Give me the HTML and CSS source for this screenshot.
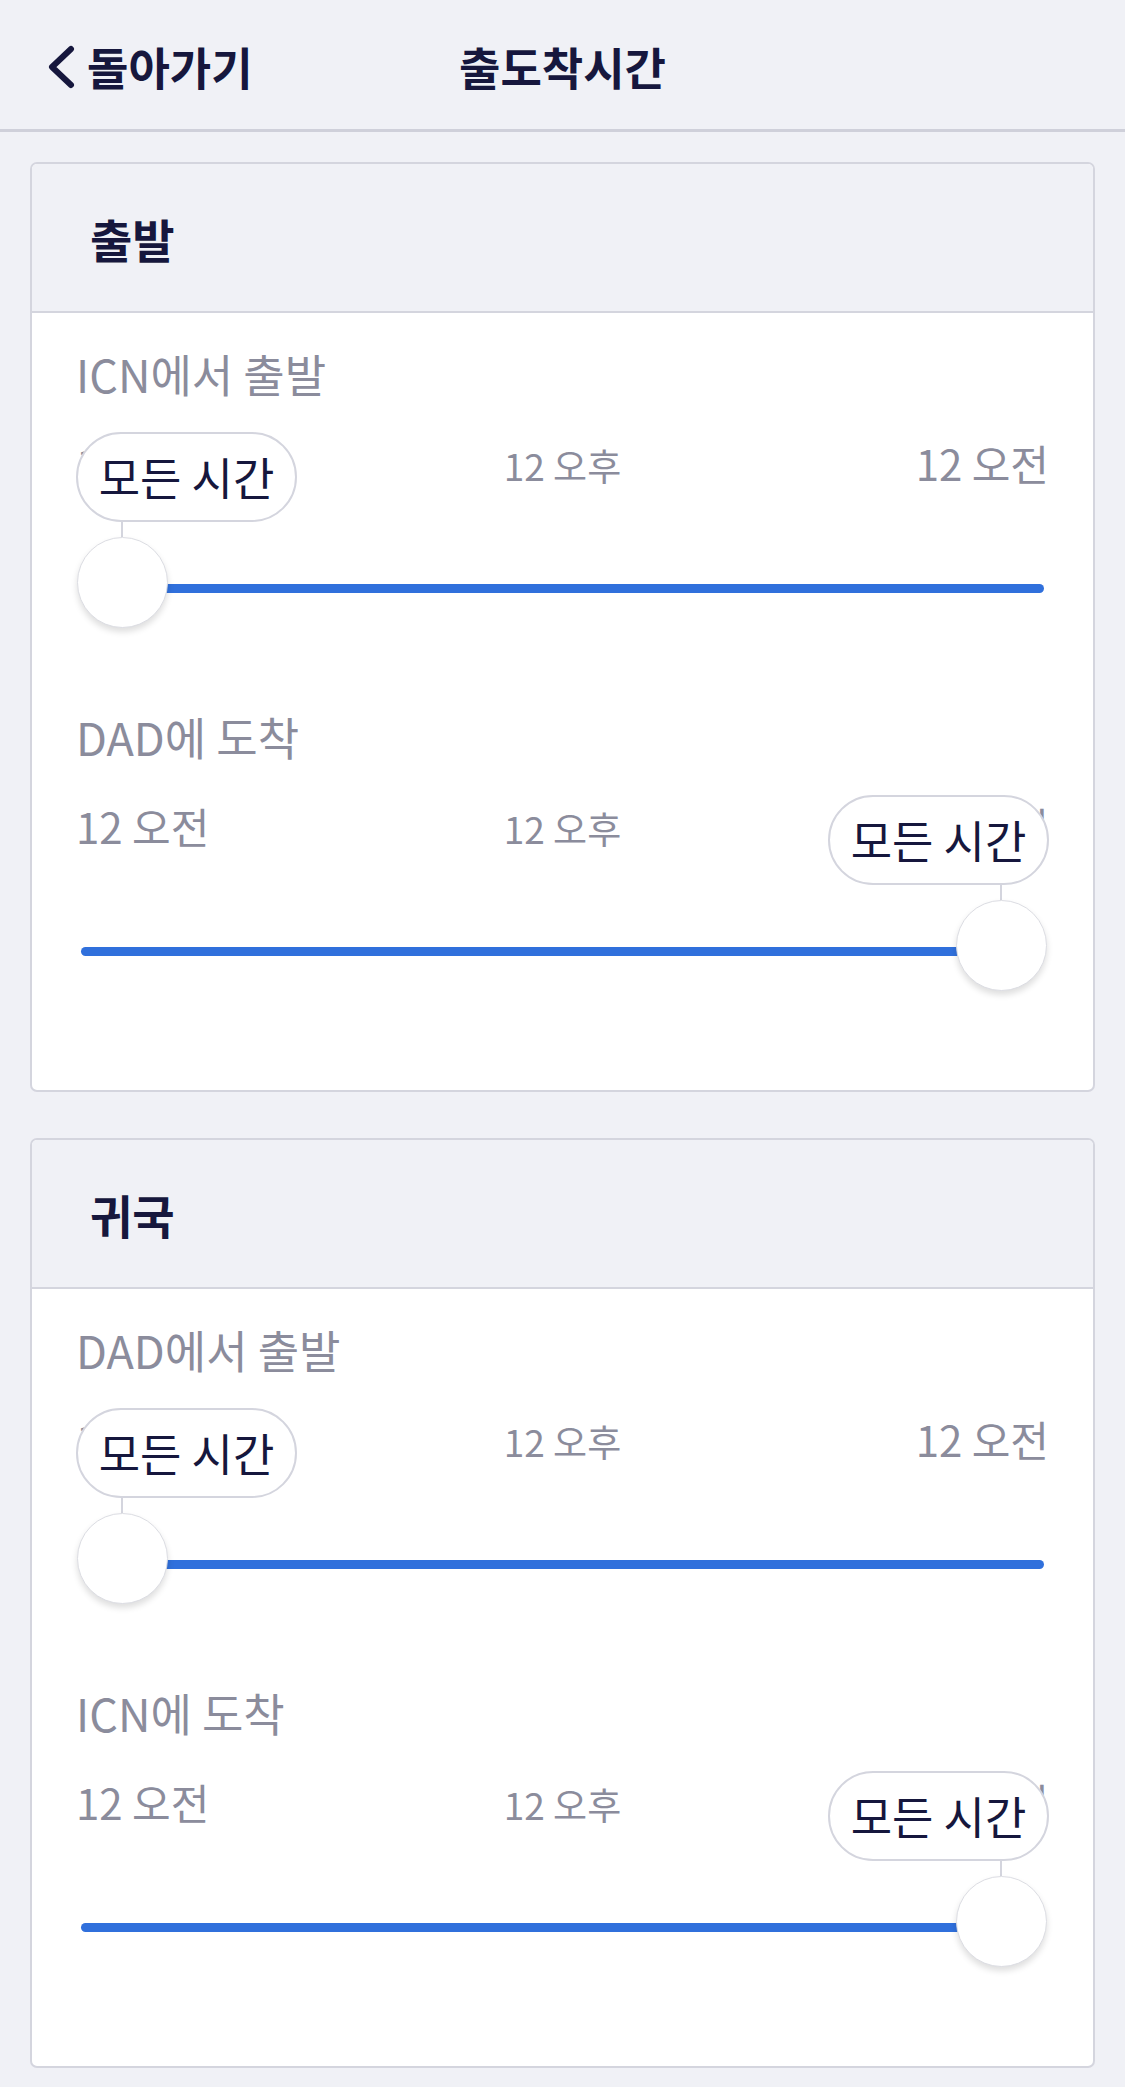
FILE: index.html
```html
<!DOCTYPE html>
<html>
<head>
  <meta name="viewport" content="width=device-width, initial-scale=1.0">
  <link rel="stylesheet" href="styles.css">
</head>
<body>
  <div class="header">
    <a class="back-button">
      <svg width="28" height="44" viewBox="0 0 28 44">
        <path d="M24 4 L5 22 L24 40" fill="none" stroke="#16173d" stroke-width="6" stroke-linecap="round" stroke-linejoin="round"/>
      </svg>
      <span>돌아가기</span>
    </a>
    <div class="title">출도착시간</div>
    <div></div>
  </div>

  <div class="content">
    <div class="card">
      <div class="card-header">출발</div>
      <div class="card-body">
        <div class="slider">
          <div class="slider-label">ICN에서 출발</div>
          <div class="range">
            <div class="ticks">
              <span class="tick">12 오전</span>
              <span class="tick mid">12 오후</span>
              <span class="tick">12 오전</span>
            </div>
            <div class="track"></div>
            <div class="bubble">모든 시간</div>
            <div class="stem"></div>
            <div class="thumb"></div>
          </div>
        </div>
        <div class="slider">
          <div class="slider-label">DAD에 도착</div>
          <div class="range end">
            <div class="ticks">
              <span class="tick">12 오전</span>
              <span class="tick mid">12 오후</span>
              <span class="tick">12 오전</span>
            </div>
            <div class="track"></div>
            <div class="bubble">모든 시간</div>
            <div class="stem"></div>
            <div class="thumb"></div>
          </div>
        </div>
      </div>
    </div>

    <div class="card">
      <div class="card-header">귀국</div>
      <div class="card-body">
        <div class="slider">
          <div class="slider-label">DAD에서 출발</div>
          <div class="range">
            <div class="ticks">
              <span class="tick">12 오전</span>
              <span class="tick mid">12 오후</span>
              <span class="tick">12 오전</span>
            </div>
            <div class="track"></div>
            <div class="bubble">모든 시간</div>
            <div class="stem"></div>
            <div class="thumb"></div>
          </div>
        </div>
        <div class="slider">
          <div class="slider-label">ICN에 도착</div>
          <div class="range end">
            <div class="ticks">
              <span class="tick">12 오전</span>
              <span class="tick mid">12 오후</span>
              <span class="tick">12 오전</span>
            </div>
            <div class="track"></div>
            <div class="bubble">모든 시간</div>
            <div class="stem"></div>
            <div class="thumb"></div>
          </div>
        </div>
      </div>
    </div>
  </div>
</body>
</html>
```

FILE: styles.css
```css
* {
  box-sizing: border-box;
}
body {
  font-family: "Noto Sans CJK KR", "Noto Sans", sans-serif;
  background: #f0f1f6;
  margin: 0;
  color: #16173d;
}
.header {
  display: grid;
  grid-template-columns: 1fr auto 1fr;
  align-items: center;
  height: 132px;
  padding-top: 4px;
  border-bottom: 3px solid #cfd0da;
}
.back-button {
  display: flex;
  align-items: center;
  gap: 12px;
  padding-left: 47px;
  font-size: 45px;
  font-weight: 700;
  line-height: 52px;
  color: #16173d;
  cursor: pointer;
}
.back-button svg {
  display: block;
}
.title {
  font-size: 45px;
  font-weight: 700;
  line-height: 52px;
}
.content {
  display: flex;
  flex-direction: column;
  gap: 46px;
  padding: 30px 30px 19px;
}
.card {
  background: #fff;
  border: 2px solid #d4d5de;
  border-radius: 7px;
  overflow: hidden;
}
.card-header {
  display: flex;
  align-items: center;
  height: 149px;
  padding-left: 58px;
  background: #f0f1f6;
  border-bottom: 2px solid #d4d5de;
  font-size: 46px;
  font-weight: 700;
  line-height: 52px;
}
.card-body {
  display: flex;
  flex-direction: column;
  gap: 84px;
  padding: 36px 44px 99px;
}
.slider-label {
  font-size: 45px;
  line-height: 50px;
  color: #8b8c9c;
  margin-bottom: 33px;
}
.range {
  position: relative;
  height: 196px;
}
.ticks {
  display: flex;
  justify-content: space-between;
  align-items: baseline;
  padding-top: 7px;
  color: #8b8c9c;
}
.tick {
  font-size: 42px;
  line-height: 48px;
}
.tick.mid {
  font-size: 37px;
}
.track {
  height: 9px;
  margin: 95px 5px 0;
  background: #3070dc;
  border-radius: 5px;
}
.bubble {
  position: absolute;
  top: 0;
  left: 0;
  width: 221px;
  height: 90px;
  background: #fff;
  border: 2px solid #d4d5de;
  border-radius: 45px;
  display: flex;
  align-items: center;
  justify-content: center;
  font-size: 45px;
  line-height: 50px;
  color: #16173d;
}
.stem {
  position: absolute;
  top: 90px;
  left: 45px;
  width: 2px;
  height: 15px;
  background: #d4d5de;
}
.thumb {
  position: absolute;
  top: 105px;
  left: 1px;
  width: 91px;
  height: 91px;
  background: #fff;
  border: 1px solid #dcdde3;
  border-radius: 50%;
  box-shadow: 0 4px 6px rgba(0, 0, 0, 0.13);
}
.range.end .bubble {
  left: auto;
  right: 0;
}
.range.end .stem {
  left: auto;
  right: 47px;
}
.range.end .thumb {
  left: auto;
  right: 2px;
}
```
